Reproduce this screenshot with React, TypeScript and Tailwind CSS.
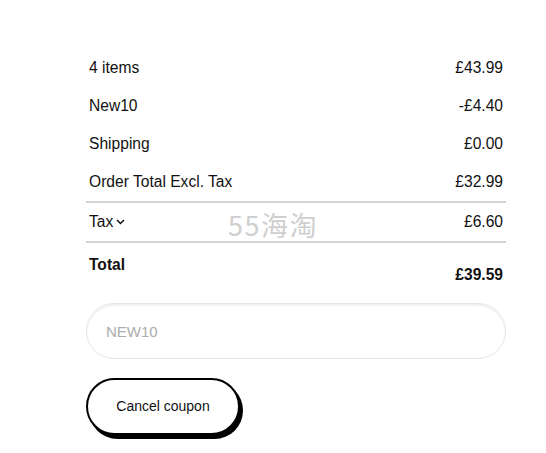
const rows = [
  { label: "4 items", value: "£43.99" },
  { label: "New10", value: "-£4.40" },
  { label: "Shipping", value: "£0.00" },
  { label: "Order Total Excl. Tax", value: "£32.99" },
];

export default function App() {
  return (
    <div
      className="min-h-screen w-[546px] bg-white text-[#111] relative"
      style={{ fontFamily: "'Liberation Sans', Arial, sans-serif" }}
    >
      <div className="ml-[86px] w-[420px] pt-[49px]">
        {rows.map((r) => (
          <div
            key={r.label}
            className="h-[38px] flex items-center justify-between px-[3px] text-[15.6px] leading-[18px]"
          >
            <span>{r.label}</span>
            <span>{r.value}</span>
          </div>
        ))}

        <div className="h-[2px] bg-[#d4d4d4]" />

        {/* Tax row */}
        <div className="h-[38px] flex items-center justify-between px-[3px] text-[15.6px] leading-[18px]">
          <span className="flex items-center gap-[3px]">
            Tax
            <svg width="9" height="6" viewBox="0 0 9 6" fill="none">
              <path d="M1 1l3.5 3.5L8 1" stroke="#111" strokeWidth="1.5" />
            </svg>
          </span>
          <span>£6.60</span>
        </div>

        <div className="h-[2px] bg-[#d4d4d4]" />

        {/* Total */}
        <div className="flex items-start justify-between px-[3px] pt-[13px] text-[15.6px] leading-[18px] font-bold">
          <span>Total</span>
          <span className="mt-[10px]">£39.59</span>
        </div>

        <input
          readOnly
          placeholder="NEW10"
          className="mt-[19px] block w-full h-[56px] rounded-full border border-[#e6e6e6] shadow-[inset_0_2px_2px_rgba(0,0,0,0.06)] pl-[19px] text-[15px] placeholder:text-[#adadad] outline-none"
        />

        <button className="mt-[19px] block w-[154px] h-[57px] rounded-full border-2 border-black bg-white shadow-[3px_4px_0_#000] text-[14px] text-[#111]">
          Cancel coupon
        </button>
      </div>

      {/* watermark */}
      <div
        className="absolute left-[228px] top-[209px] text-[27px] leading-[32px] text-[#cfcfcf] tracking-[1.5px] pointer-events-none"
        style={{ fontFamily: "'Noto Sans CJK SC', 'Noto Sans', sans-serif" }}
      >
        55海淘
      </div>
    </div>
  );
}
